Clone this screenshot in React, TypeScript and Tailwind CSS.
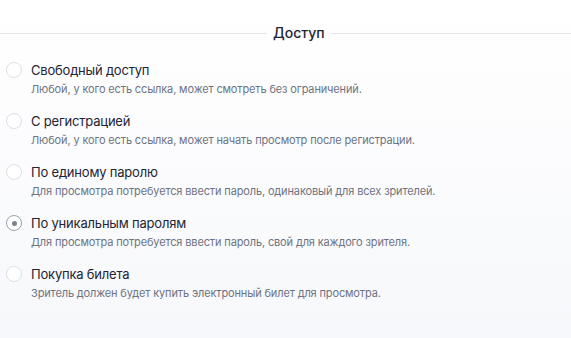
import { useState } from "react";

const options = [
  {
    id: "free",
    title: "Свободный доступ",
    desc: "Любой, у кого есть ссылка, может смотреть без ограничений.",
  },
  {
    id: "register",
    title: "С регистрацией",
    desc: "Любой, у кого есть ссылка, может начать просмотр после регистрации.",
  },
  {
    id: "single",
    title: "По единому паролю",
    desc: "Для просмотра потребуется ввести пароль, одинаковый для всех зрителей.",
  },
  {
    id: "unique",
    title: "По уникальным паролям",
    desc: "Для просмотра потребуется ввести пароль, свой для каждого зрителя.",
  },
  {
    id: "ticket",
    title: "Покупка билета",
    desc: "Зритель должен будет купить электронный билет для просмотра.",
  },
];

export default function App() {
  const [value, setValue] = useState("unique");

  return (
    <div className="min-h-[338px] w-full bg-gradient-to-b from-white to-[#f7f8fb] pt-[23px] font-['Inter','Noto_Sans',sans-serif] antialiased">
      <div className="flex h-5 items-center">
        <div className="h-px w-[267px] bg-[#e3e5eb]" />
        <h2 className="px-[6px] text-[14px] leading-5 font-medium text-[#1f2533]">Доступ</h2>
        <div className="h-px flex-1 bg-[#e3e5eb]" />
      </div>

      <div className="mt-[17px] flex flex-col gap-[14px] pl-[6px]">
        {options.map((o) => {
          const checked = value === o.id;
          return (
            <label key={o.id} className="flex cursor-pointer items-start gap-[9px]">
              <span className="flex h-5 items-center">
                <input
                  type="radio"
                  name="access"
                  className="sr-only"
                  checked={checked}
                  onChange={() => setValue(o.id)}
                />
                <span
                  className={
                    checked
                      ? "flex h-4 w-4 items-center justify-center rounded-full border border-[#9aa0ad] bg-white"
                      : "flex h-4 w-4 items-center justify-center rounded-full border border-[#dcdfe6] bg-white"
                  }
                >
                  {checked && <span className="h-[5px] w-[5px] rounded-full bg-[#7b8190]" />}
                </span>
              </span>
              <span className="flex flex-col">
                <span className="text-[13px] leading-5 tracking-[-0.2px] text-[#1e2433]">{o.title}</span>
                <span className="mt-px text-[11px] leading-4 tracking-[-0.14px] text-[#6e7382]">{o.desc}</span>
              </span>
            </label>
          );
        })}
      </div>
    </div>
  );
}
